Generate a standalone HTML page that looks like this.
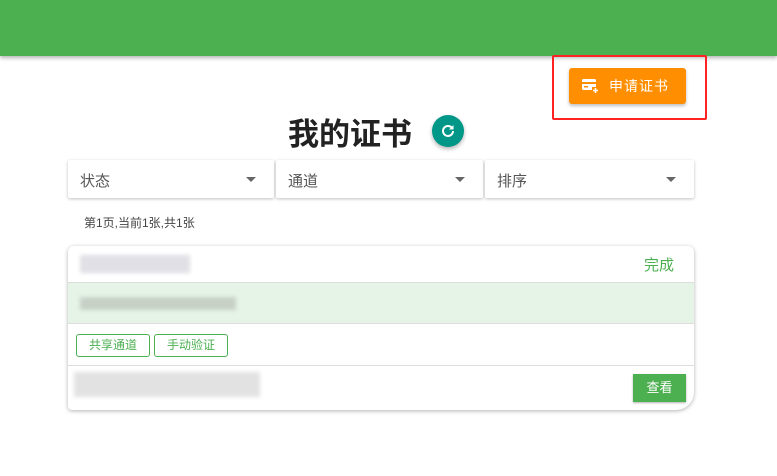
<!DOCTYPE html>
<html><head><meta charset="utf-8"><style>
*{box-sizing:border-box;margin:0;padding:0}
body{width:777px;height:476px;background:#fff;font-family:"Liberation Sans","Noto Sans CJK SC",sans-serif;position:relative;overflow:hidden}
.hdr{position:absolute;left:0;top:0;width:777px;height:56px;background:#4caf50;box-shadow:0 2px 4px rgba(0,0,0,.3)}
.redbox{position:absolute;left:552px;top:55px;width:155px;height:65px;border:2px solid #f22;border-radius:2px}
.btn{position:absolute;left:569px;top:68px;width:117px;height:36px;background:#ff8f00;border-radius:3px;box-shadow:0 2px 3px rgba(0,0,0,.25);color:#fff;font-size:14px;display:flex;align-items:center;padding-left:12px}
.btn span{margin-left:10px;letter-spacing:1px}
h1{position:absolute;left:288px;top:109px;font-size:31px;font-weight:bold;color:#222}
.rf{position:absolute;left:432px;top:115px;width:32px;height:32px;border-radius:50%;background:#009688;box-shadow:0 2px 4px rgba(0,0,0,.3)}
.sel{position:absolute;top:160px;height:38px;background:#fff;box-shadow:0 1px 3px rgba(0,0,0,.25);border-radius:2px;font-size:15px;color:#555;padding:10px 12px}
.sel:after{content:"";position:absolute;right:18px;top:17px;border:5px solid transparent;border-top-color:#666}
.info{position:absolute;left:84px;top:214px;font-size:12px;color:#444}
.card{position:absolute;left:68px;top:246px;width:626px;height:164px;background:#fff;border-radius:6px 6px 18px 4px;box-shadow:0 1px 4px rgba(0,0,0,.3);overflow:hidden}
.r{position:absolute;left:0;width:100%;border-bottom:1px solid #ddd}
.blur{position:absolute;background:#ddd;filter:blur(2px)}
.tag{position:absolute;top:88px;width:74px;height:23px;border:1px solid #4caf50;border-radius:3px;color:#4caf50;font-size:12px;line-height:21px;text-align:center}
.view{position:absolute;left:565px;top:128px;width:53px;height:28px;background:#4caf50;color:#fff;font-size:13px;text-align:center;line-height:28px;box-shadow:0 1px 2px rgba(0,0,0,.3)}
</style></head><body>
<div class="hdr"></div>
<div class="redbox"></div>
<div class="btn"><svg width="18" height="16" viewBox="0 0 18 16"><rect x="1" y="1" width="14" height="11" rx="1.5" fill="#fff"/><rect x="1" y="4" width="14" height="2" fill="#ff8f00"/><rect x="3" y="8" width="4" height="1.5" fill="#ff8f00"/><rect x="11" y="9" width="7" height="7" fill="#ff8f00"/><path d="M14.5 10v5M12 12.5h5" stroke="#fff" stroke-width="1.6"/></svg><span>申请证书</span></div>
<h1>我的证书</h1>
<div class="rf"><svg width="32" height="32" viewBox="0 0 32 32"><path d="M21 16a5 5 0 1 1-1.5-3.6" fill="none" stroke="#fff" stroke-width="2"/><path d="M21.5 10v4.5H17z" fill="#fff"/></svg></div>
<div class="sel" style="left:68px;width:206px">状态</div>
<div class="sel" style="left:276px;width:207px">通道</div>
<div class="sel" style="left:485px;width:209px">排序</div>
<div class="info">第1页,当前1张,共1张</div>
<div class="card">
<div class="r" style="top:0;height:37px"><div class="blur" style="left:12px;top:9px;width:110px;height:18px;background:#e0e0e6"></div><span style="position:absolute;right:20px;top:8px;color:#4caf50;font-size:15px">完成</span></div>
<div class="r" style="top:37px;height:41px;background:#e6f4e8"><div class="blur" style="left:12px;top:14px;width:156px;height:13px;background:#c6d0c6"></div></div>
<div class="r" style="top:78px;height:42px"></div>
<div class="tag" style="left:8px">共享通道</div>
<div class="tag" style="left:86px">手动验证</div>
<div class="blur" style="left:6px;top:126px;width:186px;height:25px;background:#e2e2e2"></div>
<div class="view">查看</div>
</div>
</body></html>
